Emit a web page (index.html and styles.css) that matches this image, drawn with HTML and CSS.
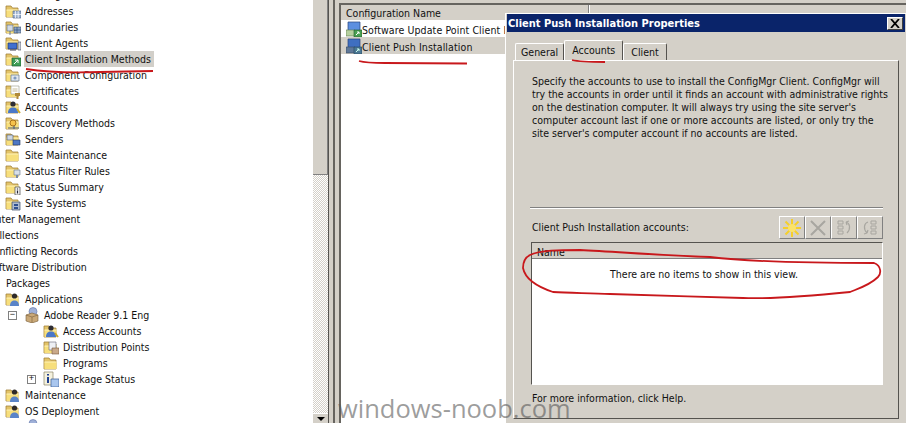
FILE: index.html
```html
<!DOCTYPE html>
<html lang="en">
<head>
<meta charset="utf-8">
<title>Client Push Installation Properties</title>
<link rel="stylesheet" href="styles.css">
</head>
<body>
<svg class="defs" width="0" height="0" aria-hidden="true">
  <symbol id="folder" viewBox="0 0 16 16">
    <path d="M1 3h5l1.500 2H13v9H1z" fill="#e3c468" stroke="#a3843c" stroke-width=".8"/>
    <path d="M1.500 7h12v7h-12z" fill="#f7df7c"/>
    <path d="M1.500 7h12" stroke="#fff3b8"/>
  </symbol>
  <symbol id="o-grid" viewBox="0 0 16 16">
    <path d="M8 8h8v7H8z" fill="#9fb4d0" stroke="#4a5f80" stroke-width=".6"/>
    <path d="M10.500 8v7M13.200 8v7M8 11.500h8" stroke="#fff" stroke-width=".7"/>
  </symbol>
  <symbol id="o-bound" viewBox="0 0 16 16">
    <path d="M2 6h6v6H2z" fill="#cfd8e4" stroke="#55657d" stroke-width=".6"/>
    <path d="M9 8h7v6H9z" fill="#8ea6c6" stroke="#40506c" stroke-width=".6"/>
    <path d="M12 8v6M9 11h7M5 12v4" stroke="#30507f" stroke-width=".7"/>
  </symbol>
  <symbol id="o-agent" viewBox="0 0 16 16">
    <path d="M3 8h9v6H3z" fill="#3f6fd0" stroke="#20356e" stroke-width=".7"/>
    <path d="M13 7h3v8h-3z" fill="#c8d0dc" stroke="#445" stroke-width=".6"/>
    <path d="M5 15h6" stroke="#445"/>
  </symbol>
  <symbol id="o-method" viewBox="0 0 16 16">
    <path d="M7 7h9v8H7z" fill="#3f9f55" stroke="#1e5c30" stroke-width=".7"/>
    <path d="M9 13l4-4m0 0h-3m3 0v3" stroke="#fff" fill="none"/>
  </symbol>
  <symbol id="o-comp" viewBox="0 0 16 16">
    <path d="M6 8h8v6H6z" fill="#dfe6ee" stroke="#66758c" stroke-width=".7"/>
    <circle cx="10" cy="11" r="1.600" fill="#7f9ac0"/>
  </symbol>
  <symbol id="o-cert" viewBox="0 0 16 16">
    <path d="M6 3h8v8H6z" fill="#fff" stroke="#998" stroke-width=".6"/>
    <path d="M7.500 6h5M7.500 8h5" stroke="#b0a070" stroke-width=".7"/>
    <path d="M10 10h5v3h-1.500v3h-2v-3H10z" fill="#b08a3a"/>
  </symbol>
  <symbol id="o-person" viewBox="0 0 16 16">
    <circle cx="8" cy="5" r="2.600" fill="#2d2d33"/>
    <path d="M3 14c0-4 2-5.500 5-5.500s5 1.500 5 5.500z" fill="#4a78c8"/>
    <path d="M12 10l3 4" stroke="#c8a92e" stroke-width="1.800"/>
  </symbol>
  <symbol id="o-disc" viewBox="0 0 16 16">
    <circle cx="8" cy="8" r="3" fill="#f6c24a" stroke="#a8701c"/>
    <path d="M3 13h11M9 11v3" stroke="#50607c" stroke-width="1.200"/>
  </symbol>
  <symbol id="o-send" viewBox="0 0 16 16">
    <path d="M2 4h6v5H2z" fill="#cdd6e2" stroke="#4a5a74" stroke-width=".6"/>
    <path d="M8 9h7v5H8z" fill="#4f78c4" stroke="#24385f" stroke-width=".6"/>
  </symbol>
  <symbol id="o-filter" viewBox="0 0 16 16">
    <path d="M9 7h6v5H9z" fill="#d8dfe8" stroke="#66758c" stroke-width=".6"/>
    <path d="M11 12h2v3h-2z" fill="#7b8aa2"/>
  </symbol>
  <symbol id="o-info" viewBox="0 0 16 16">
    <path d="M10 8h5v8h-5z" fill="#f4f4f4" stroke="#444" stroke-width=".7"/>
    <path d="M12.500 9.500v1M12.500 11.500v3" stroke="#223" stroke-width="1.200"/>
  </symbol>
  <symbol id="o-site" viewBox="0 0 16 16">
    <path d="M7 7h8v8H7z" fill="#aebbd0" stroke="#3a4a66" stroke-width=".7"/>
    <path d="M9 9h4v2H9zM9 12h4v2H9z" fill="#2f4f8f"/>
  </symbol>
  <symbol id="o-app" viewBox="0 0 16 16">
    <circle cx="9.500" cy="5" r="2.600" fill="#2e2a28"/>
    <path d="M5 15c0-4 2-5.500 4.500-5.500S14 11 14 15z" fill="#5a84c8"/>
  </symbol>
  <symbol id="o-dist" viewBox="0 0 16 16">
    <path d="M6 3h7v8H6z" fill="#eef0f4" stroke="#667" stroke-width=".6"/>
    <path d="M9 9h7v6H9z" fill="#c9a98a" stroke="#75583c" stroke-width=".6"/>
  </symbol>
  <symbol id="pkg" viewBox="0 0 16 16">
    <circle cx="9" cy="4.500" r="4" fill="#9fb0d8" stroke="#6073a8" stroke-width=".6"/>
    <path d="M2 8l6-2 6 2v6l-6 2-6-2z" fill="#c9a878" stroke="#7b5f3a" stroke-width=".6"/>
    <path d="M2 8l6 2 6-2M8 10v6" stroke="#7b5f3a" stroke-width=".6" fill="none"/>
  </symbol>
  <symbol id="status" viewBox="0 0 16 16">
    <path d="M1 1h9v13H1z" fill="#f4f1de" stroke="#8a8468" stroke-width=".7"/>
    <path d="M5 3v1.500M5 6v6" stroke="#1f3f90" stroke-width="2"/>
    <path d="M8 8h8v8H8z" fill="#a9c6ee" stroke="#365a94" stroke-width=".7"/>
  </symbol>
  <symbol id="cfg-a" viewBox="0 0 16 16">
    <path d="M2 1h12v9H2z" fill="#5c8fe0" stroke="#25437c" stroke-width=".7"/>
    <path d="M0 9h9v6H0z" fill="#b6d0a0" stroke="#5b7b48" stroke-width=".6"/>
    <path d="M8 9h8v7H8z" fill="#49a052" stroke="#20592b" stroke-width=".6"/>
    <path d="M10 14l3-3m0 0h-2m2 0v2" stroke="#fff" fill="none"/>
  </symbol>
  <symbol id="cfg-b" viewBox="0 0 16 16">
    <path d="M2 1h12v9H2z" fill="#3f6fc0" stroke="#25437c" stroke-width=".7"/>
    <path d="M0 9h9v6H0z" fill="#5f7898" stroke="#36485f" stroke-width=".6"/>
    <path d="M8 9h8v7H8z" fill="#4d7894" stroke="#24465c" stroke-width=".6"/>
    <path d="M10 14l3-3m0 0h-2m2 0v2" stroke="#cfe" fill="none"/>
  </symbol>
</svg>

<div class="console">
  <nav class="tree">
    <div class="row l1"><svg class="ico"><use href="#folder"/></svg><span class="label">Site Settings</span></div>
    <div class="row l2"><svg class="ico"><use href="#folder"/><use href="#o-grid"/></svg><span class="label">Addresses</span></div>
    <div class="row l2"><svg class="ico"><use href="#folder"/><use href="#o-bound"/></svg><span class="label">Boundaries</span></div>
    <div class="row l2"><svg class="ico"><use href="#folder"/><use href="#o-agent"/></svg><span class="label">Client Agents</span></div>
    <div class="row l2"><svg class="ico"><use href="#folder"/><use href="#o-method"/></svg><span class="label selected">Client Installation Methods</span></div>
    <div class="row l2"><svg class="ico"><use href="#folder"/><use href="#o-comp"/></svg><span class="label">Component Configuration</span></div>
    <div class="row l2"><svg class="ico"><use href="#folder"/><use href="#o-cert"/></svg><span class="label">Certificates</span></div>
    <div class="row l2"><svg class="ico"><use href="#folder"/><use href="#o-person"/></svg><span class="label">Accounts</span></div>
    <div class="row l2"><svg class="ico"><use href="#folder"/><use href="#o-disc"/></svg><span class="label">Discovery Methods</span></div>
    <div class="row l2"><svg class="ico"><use href="#folder"/><use href="#o-send"/></svg><span class="label">Senders</span></div>
    <div class="row l2"><svg class="ico"><use href="#folder"/></svg><span class="label">Site Maintenance</span></div>
    <div class="row l2"><svg class="ico"><use href="#folder"/><use href="#o-filter"/></svg><span class="label">Status Filter Rules</span></div>
    <div class="row l2"><svg class="ico"><use href="#folder"/><use href="#o-info"/></svg><span class="label">Status Summary</span></div>
    <div class="row l2"><svg class="ico"><use href="#folder"/><use href="#o-site"/></svg><span class="label">Site Systems</span></div>
    <div class="row l0"><svg class="ico"><use href="#folder"/></svg><span class="label">Computer Management</span></div>
    <div class="row l1n"><svg class="ico"><use href="#folder"/></svg><span class="label">Collections</span></div>
    <div class="row l1n"><svg class="ico"><use href="#folder"/></svg><span class="label">Conflicting Records</span></div>
    <div class="row l1n"><svg class="ico"><use href="#folder"/></svg><span class="label">Software Distribution</span></div>
    <div class="row l1"><svg class="ico"><use href="#folder"/></svg><span class="label">Packages</span></div>
    <div class="row l2"><svg class="ico"><use href="#folder"/><use href="#o-app"/></svg><span class="label">Applications</span></div>
    <div class="row l3"><span class="exp">&#8722;</span><svg class="ico"><use href="#pkg"/></svg><span class="label">Adobe Reader 9.1 Eng</span></div>
    <div class="row l4"><svg class="ico"><use href="#folder"/><use href="#o-person"/></svg><span class="label">Access Accounts</span></div>
    <div class="row l4"><svg class="ico"><use href="#folder"/><use href="#o-dist"/></svg><span class="label">Distribution Points</span></div>
    <div class="row l4"><svg class="ico"><use href="#folder"/></svg><span class="label">Programs</span></div>
    <div class="row l4"><span class="exp">+</span><svg class="ico"><use href="#status"/></svg><span class="label">Package Status</span></div>
    <div class="row l2"><svg class="ico"><use href="#folder"/><use href="#o-app"/></svg><span class="label">Maintenance</span></div>
    <div class="row l2"><svg class="ico"><use href="#folder"/><use href="#o-app"/></svg><span class="label">OS Deployment</span></div>
    <div class="row l3"><svg class="ico"><use href="#pkg"/></svg><span class="label">Image Package</span></div>
  </nav>

  <div class="scrollbar">
    <div class="thumb"></div>
    <div class="track"></div>
    <div class="arrow-btn"><span class="arrow"></span></div>
  </div>

  <div class="splitter"></div>

  <section class="results">
    <div class="col-head"><span class="col-name">Configuration Name</span><span class="col-rest"></span></div>
    <div class="result"><svg class="ico"><use href="#cfg-a"/></svg><span>Software Update Point Client Installation</span></div>
    <div class="result sel"><svg class="ico"><use href="#cfg-b"/></svg><span>Client Push Installation</span></div>
  </section>
</div>

<div class="dialog">
  <header class="titlebar">
    <span>Client Push Installation Properties</span>
    <button class="close" type="button"><svg width="10" height="9" viewBox="0 0 10 9"><path d="M1 0l8 9M9 0L1 9" stroke="#000" stroke-width="1.800"/></svg></button>
  </header>
  <div class="tabs">
    <span class="tab">General</span>
    <span class="tab active">Accounts</span>
    <span class="tab">Client</span>
  </div>
  <div class="panel">
    <p class="intro">Specify the accounts to use to install the ConfigMgr Client. ConfigMgr will<br>try the accounts in order until it finds an account with administrative rights<br>on the destination computer. It will always try using the site server's<br>computer account last if one or more accounts are listed, or only try the<br>site server's computer account if no accounts are listed.</p>
    <div class="rule"></div>
    <div class="acct-bar">
      <span class="acct-label">Client Push Installation accounts:</span>
      <div class="tools">
        <button class="tool" type="button"><svg width="20" height="20" viewBox="0 0 20 20"><path d="M10 1v18M1 10h18M3.500 3.500l13 13M16.500 3.500l-13 13" stroke="#f5cf2c" stroke-width="2"/><circle cx="10" cy="10" r="4" fill="#fbe36a"/></svg></button>
        <button class="tool" type="button"><svg width="18" height="18" viewBox="0 0 18 18"><path d="M2 2l14 14M16 2L2 16" stroke="#a8a6a0" stroke-width="2"/></svg></button>
        <button class="tool" type="button"><svg width="18" height="18" viewBox="0 0 18 18"><path d="M3 2h5v3H3zM3 7h5v3H3zM3 12h5v3H3z" fill="none" stroke="#a8a6a0"/><path d="M11 3c4 1 5 7 1 11M11 3l3-1M11 3l1 3" fill="none" stroke="#a8a6a0" stroke-width="1.200"/></svg></button>
        <button class="tool" type="button"><svg width="18" height="18" viewBox="0 0 18 18"><path d="M10 2h5v3h-5zM10 7h5v3h-5zM10 12h5v3h-5z" fill="none" stroke="#a8a6a0"/><path d="M7 3C3 4 2 10 6 14M6 14l-3 1M6 14l1-3" fill="none" stroke="#a8a6a0" stroke-width="1.200"/></svg></button>
      </div>
    </div>
    <div class="acct-list">
      <div class="acct-head">Name</div>
      <div class="acct-empty">There are no items to show in this view.</div>
    </div>
    <p class="help">For more information, click Help.</p>
  </div>
</div>

<svg class="ink" width="906" height="423" viewBox="0 0 906 423" aria-hidden="true">
  <path d="M26 69C45 72 70 73 100 72L153 71"/>
  <path d="M359 61C366 63 375 63 385 63L467 63.500"/>
  <path d="M572 60C580 62 590 62 605 62"/>
  <path d="M530 255C540 250 560 250 580 250C620 252 670 256 710 257C750 262 820 263 874 263C882 266 881 274 878 277C870 285 860 288 850 292C810 296 770 299 743 298C700 297 650 295 610 294C590 293 570 293 553 292C535 286 525 278 523 268C523 261 526 257 530 255Z"/>
</svg>

<div class="watermark">windows-noob.com</div>
</body>
</html>
```
FILE: styles.css
```css
html, body {
  margin: 0;
  padding: 0;
  width: 906px;
  height: 423px;
  overflow: hidden;
  background: #d4d0c8;
  font-family: "DejaVu Sans", sans-serif;
  font-stretch: condensed;
  font-size: 10.5px;
  color: #111;
}

.defs { position: absolute; }

.console {
  display: flex;
  height: 423px;
  overflow: hidden;
}

/* tree */
.tree {
  width: 313px;
  flex: none;
  background: #fff;
  overflow: hidden;
  margin: 0;
}
.tree .row:first-child { margin-top: -13px; }
.row {
  height: 16px;
  display: flex;
  align-items: center;
  white-space: nowrap;
}
.ico { width: 16px; height: 16px; flex: none; display: block; }
.ico use { width: 16px; height: 16px; }
.label {
  margin-left: 3px;
  padding: 0 3px 0 1px;
  line-height: 16px;
}
.selected { background: #d2cfc9; }
.l0 { margin-left: -52px; }
.l1n { margin-left: -33px; }
.l1 { margin-left: -14px; }
.l2 { margin-left: 5px; }
.l3 { margin-left: 24px; }
.l4 { margin-left: 43px; }
.exp {
  flex: none;
  box-sizing: border-box;
  width: 9px;
  height: 9px;
  margin-left: -16px;
  margin-right: 7px;
  border: 1px solid #808080;
  font-size: 9px;
  line-height: 7px;
  text-align: center;
  font-family: "Liberation Mono", monospace;
}

/* scrollbar */
.scrollbar {
  width: 16px;
  flex: none;
  display: flex;
  flex-direction: column;
  border-right: 1px solid #55534f;
  box-sizing: border-box;
}
.thumb {
  height: 175px;
  flex: none;
  box-sizing: border-box;
  background: #d4d0c8;
  border-right: 1px solid #808080;
  border-bottom: 1px solid #808080;
}
.track {
  height: 238px;
  flex: none;
  background: repeating-conic-gradient(#d4d0c8 0 25%, #fff 0 50%) 0 0 / 2px 2px;
}
.arrow-btn {
  height: 16px;
  flex: none;
  background: #d4d0c8;
  border-top: 1px solid #fff;
  display: flex;
  justify-content: center;
  padding-top: 3px;
}
.arrow {
  width: 0;
  height: 0;
  border: 4px solid transparent;
  border-top: 4px solid #000;
  border-bottom: 0;
}

.splitter {
  width: 7px;
  flex: none;
  box-sizing: border-box;
  border-right: 2px solid #66645f;
  margin-left: -1px;
}

/* results list */
.results {
  flex: 1;
  margin: 3px 0 0 4px;
  background: #fff;
  border-top: 2px solid #66645f;
  border-left: 2px solid #66645f;
  min-width: 0;
}
.col-head {
  height: 15px;
  display: flex;
  background: #d4d0c8;
  line-height: 17px;
}
.col-name {
  box-sizing: border-box;
  width: 248px;
  padding-left: 5px;
  border-right: 1px solid #808080;
}
.col-rest { flex: 1; border-left: 1px solid #fff; }
.result {
  height: 17px;
  display: flex;
  align-items: center;
  padding-left: 5px;
  white-space: nowrap;
  overflow: hidden;
}
.result span { padding-top: 3px; line-height: 14px; letter-spacing: .1px; }
.result.sel { background: #d4d0c8; }

/* dialog */
.dialog {
  position: absolute;
  left: 505px;
  top: 13px;
  width: 401px;
  height: 420px;
  box-sizing: border-box;
  background: #d4d0c8;
  border-top: 1px solid #fff;
  border-left: 1px solid #fff;
}
.titlebar {
  height: 18px;
  margin-right: 1px;
  margin-left: 1px;
  background: #0a246a;
  color: #fff;
  font-size: 11px;
  font-weight: bold;
  display: flex;
  align-items: center;
  justify-content: space-between;
  padding: 0 2px 0 1px;
}
.close {
  width: 16px;
  height: 13px;
  padding: 0;
  margin: 0;
  box-sizing: border-box;
  background: #d4d0c8;
  border: 1px solid;
  border-color: #fff #404040 #404040 #fff;
  display: flex;
  align-items: center;
  justify-content: center;
}
.tabs {
  display: flex;
  align-items: flex-end;
  height: 20px;
  margin-top: 8px;
  padding-left: 9px;
}
.tab {
  box-sizing: border-box;
  height: 17px;
  padding: 0 6px;
  line-height: 16px;
  border: 1px solid;
  border-color: #fff #55534f transparent #fff;
  border-bottom: 0;
  border-radius: 2px 2px 0 0;
}
.tab:first-child { padding: 0 5px; }
.tab:last-child { padding: 0 7px; }
.tab.active {
  height: 20px;
  padding: 0 7px;
  line-height: 18px;
  position: relative;
}
.panel {
  box-sizing: border-box;
  width: 386px;
  height: 359px;
  margin-left: 7px;
  padding: 14px 15px 0 17px;
  border: 1px solid;
  border-color: #fff #55534f #55534f #fff;
}
.intro {
  margin: 0 0 0 1px;
  line-height: 13px;
  white-space: nowrap;
}
.rule {
  margin: 67px 0 0 -1px;
  height: 2px;
  box-sizing: border-box;
  border-top: 1px solid #808080;
  border-bottom: 1px solid #fff;
}
.acct-bar {
  display: flex;
  justify-content: space-between;
  align-items: center;
  height: 23px;
  margin-top: 7px;
}
.acct-label { padding-left: 1px; padding-bottom: 1px; }
.tools { display: flex; }
.tool {
  box-sizing: border-box;
  width: 26px;
  height: 23px;
  padding: 0;
  background: #d4d0c8;
  border: 1px solid;
  border-color: #fff #808080 #808080 #fff;
  display: flex;
  align-items: center;
  justify-content: center;
}
.acct-list {
  box-sizing: border-box;
  height: 143px;
  margin-top: 3px;
  background: #fff;
  border: 1px solid;
  border-color: #55534f #fff #fff #55534f;
}
.acct-head {
  height: 15px;
  padding-left: 5px;
  line-height: 18px;
  background: #d4d0c8;
  border-bottom: 1px solid #808080;
}
.acct-empty {
  text-align: center;
  margin-top: 7px;
  padding-right: 6px;
  line-height: 16px;
  color: #111;
}
.help {
  margin: 7px 0 0 1px;
  line-height: 13px;
}

/* overlays */
.ink {
  position: absolute;
  left: 0;
  top: 0;
  fill: none;
  stroke: #c8181c;
  stroke-width: 1.800;
}
.watermark {
  position: absolute;
  left: 338px;
  top: 393px;
  font-family: "Open Sans", sans-serif;
  font-stretch: normal;
  font-size: 25.500px;
  line-height: 30px;
  color: rgba(90, 90, 90, .6);
  white-space: nowrap;
}
```
